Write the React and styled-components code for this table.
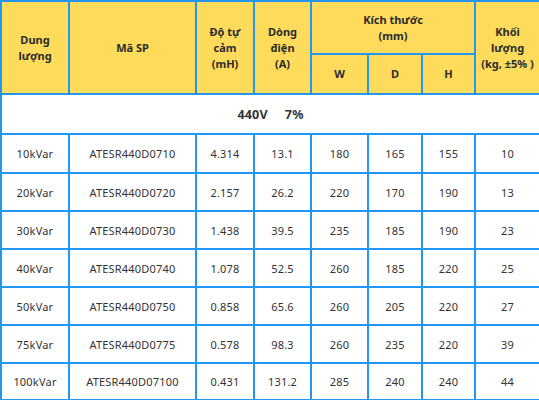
import React from 'react';
import styled, { createGlobalStyle } from 'styled-components';

const GlobalStyle = createGlobalStyle`
  html, body {
    margin: 0;
    padding: 0;
    background: #ffffff;
  }
`;

const Table = styled.table`
  width: 539px;
  border-collapse: collapse;
  table-layout: fixed;
  font-family: "Noto Sans", "Open Sans", sans-serif;
  color: #333333;
`;

const HeadCell = styled.th`
  background: #fedb5b;
  border: 2px solid #2196f3;
  font-size: 11px;
  font-weight: 700;
  line-height: 16px;
  color: #2b2b2b;
  text-align: center;
  vertical-align: middle;
  padding: 0 2px;
`;

const Row = styled.tr`
  height: ${({ $h }) => $h}px;
`;

const Cell = styled.td`
  border: 2px solid #2196f3;
  font-size: ${({ $bold }) => ($bold ? '12.5px' : '11px')};
  text-align: center;
  vertical-align: middle;
  padding: 0;
  font-weight: ${({ $bold }) => ($bold ? 700 : 400)};
  letter-spacing: 0.2px;
`;

const Gap = styled.span`
  display: inline-block;
  width: 17px;
`;

const widths = [68, 127, 58, 57, 57, 54, 53, 65];

const rows = [
  ['10kVar', 'ATESR440D0710', '4.314', '13.1', '180', '165', '155', '10'],
  ['20kVar', 'ATESR440D0720', '2.157', '26.2', '220', '170', '190', '13'],
  ['30kVar', 'ATESR440D0730', '1.438', '39.5', '235', '185', '190', '23'],
  ['40kVar', 'ATESR440D0740', '1.078', '52.5', '260', '185', '220', '25'],
  ['50kVar', 'ATESR440D0750', '0.858', '65.6', '260', '205', '220', '27'],
  ['75kVar', 'ATESR440D0775', '0.578', '98.3', '260', '235', '220', '39'],
  ['100kVar', 'ATESR440D07100', '0.431', '131.2', '285', '240', '240', '44'],
];

const rowHeights = [39, 38, 38, 38, 38, 38, 37];

export default function App() {
  return (
    <>
      <GlobalStyle />
      <Table>
        <colgroup>
          {widths.map((w, i) => (
            <col key={i} style={{ width: w }} />
          ))}
        </colgroup>
        <thead>
          <Row $h={53}>
            <HeadCell rowSpan={2}>Dung<br />lượng</HeadCell>
            <HeadCell rowSpan={2}>Mã SP</HeadCell>
            <HeadCell rowSpan={2}>Độ tự<br />cảm<br />(mH)</HeadCell>
            <HeadCell rowSpan={2}>Dòng<br />điện<br />(A)</HeadCell>
            <HeadCell colSpan={3}>Kích thước<br />(mm)</HeadCell>
            <HeadCell rowSpan={2}>Khối<br />lượng<br />(kg, ±5% )</HeadCell>
          </Row>
          <Row $h={40}>
            <HeadCell>W</HeadCell>
            <HeadCell>D</HeadCell>
            <HeadCell>H</HeadCell>
          </Row>
        </thead>
        <tbody>
          <Row $h={40}>
            <Cell colSpan={8} $bold>440V<Gap />7%</Cell>
          </Row>
          {rows.map((r, i) => (
            <Row key={r[1]} $h={rowHeights[i]}>
              {r.map((v, j) => (
                <Cell key={j}>{v}</Cell>
              ))}
            </Row>
          ))}
        </tbody>
      </Table>
    </>
  );
}
